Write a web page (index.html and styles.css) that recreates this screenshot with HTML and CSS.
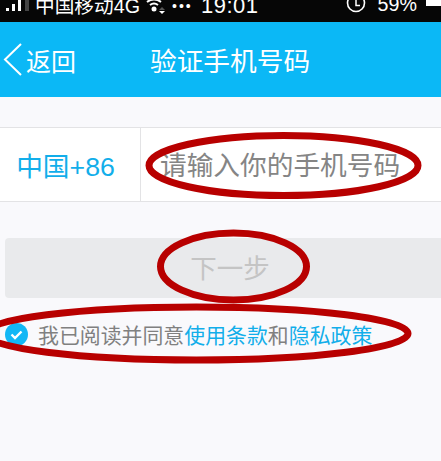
FILE: index.html
```html
<!DOCTYPE html>
<html lang="zh-cn">
<head>
    <meta charset="UTF-8">
    <meta name="viewport" content="width=device-width, initial-scale=1.0">
    <title>验证手机号码</title>
    <link rel="stylesheet" href="styles.css">
</head>
<body>
    <div class="screen">
        <div class="status-bar">
            <div class="status-left">
                <svg class="signal" width="29" height="13" viewBox="0 0 29 13">
                    <rect x="6" y="9" width="3" height="3" fill="#fff"/>
                    <rect x="12" y="5" width="3" height="7" fill="#fff"/>
                    <rect x="18" y="0" width="3" height="12" fill="#fff"/>
                    <rect x="25" y="0" width="4" height="12" fill="#444"/>
                </svg>
                <span class="carrier">中国移动4G</span>
                <svg class="wifi" width="20" height="14" viewBox="0 0 20 14">
                    <path d="M1 2 Q8 -3 15 2 M4 5 Q8 2 12 5" fill="none" stroke="#fff" stroke-width="2"/>
                    <circle cx="8" cy="9" r="2.5" fill="#fff"/>
                    <path d="M13 10 L16 7 L19 10 Z" fill="#555"/>
                    <path d="M13 11 L19 11 L16 14 Z" fill="#fff"/>
                </svg>
                <span class="dots">•••</span>
            </div>
            <span class="clock">19:01</span>
            <div class="status-right">
                <svg class="alarm" width="20" height="20" viewBox="0 0 20 20">
                    <circle cx="10" cy="3" r="8.5" fill="none" stroke="#fff" stroke-width="1.6"/>
                    <path d="M10 0 V5.5 H14" fill="none" stroke="#fff" stroke-width="1.5"/>
                </svg>
                <span class="battery-text">59%</span>
                <span class="battery"></span>
            </div>
        </div>
        <div class="nav-bar">
            <div class="nav-back">
                <svg width="22" height="33" viewBox="0 0 22 33">
                    <path d="M21 1 L5 16.5 L21 32" fill="none" stroke="#fff" stroke-width="2"/>
                </svg>
                <span>返回</span>
            </div>
            <span class="nav-title">验证手机号码</span>
        </div>
        <div class="phone-row">
            <div class="country">中国+86</div>
            <div class="phone-input">请输入你的手机号码</div>
        </div>
        <div class="next-btn">下一步</div>
        <div class="agree">
            <svg class="check" width="23" height="23" viewBox="0 0 23 23">
                <circle cx="11.5" cy="11.5" r="11.5" fill="#12b7f5"/>
                <path d="M6.5 11.5 L10 15 L16.5 8.5" fill="none" stroke="#fff" stroke-width="2.4"/>
            </svg>
            <span>我已阅读并同意<a class="link">使用条款</a>和<a class="link">隐私政策</a></span>
        </div>
        <!-- 红圈标注 -->
        <svg class="marks" width="441" height="461" viewBox="0 0 441 461">
            <ellipse cx="283.5" cy="165.5" rx="134.5" ry="30" />
            <ellipse cx="233.5" cy="266.5" rx="73" ry="33.5" />
            <ellipse cx="196.5" cy="333.5" rx="211.5" ry="26.5" />
        </svg>
    </div>
</body>
</html>
```

FILE: styles.css
```css
html,
body {
    margin: 0;
    padding: 0;
    height: 100%;
    overflow: hidden;
}
body {
    background-color: #f9f9fc;
    font-family: "Noto Sans CJK SC", "Liberation Sans", sans-serif;
}
.screen {
    position: relative;
    width: 441px;
    height: 461px;
    overflow: hidden;
}
.status-bar {
    height: 22px;
    background-color: #060606;
    color: #fff;
    display: flex;
    align-items: flex-end;
    overflow: hidden;
    font-family: "Liberation Sans", "Noto Sans CJK SC", sans-serif;
    font-size: 19.7px;
    line-height: 22px;
}
.status-bar span {
    position: relative;
    top: -5px;
}
.status-left {
    display: flex;
    width: 201px;
    align-items: flex-end;
    flex: none;
}
.signal {
    margin-bottom: 10px;
    flex: none;
}
.carrier {
    margin-left: 6px;
}
.wifi {
    margin: 0 0 8px 6px;
    flex: none;
}
.dots {
    margin-left: 6px;
    font-size: 14px;
    letter-spacing: 2px;
}
.clock {
    font-size: 22px;
    letter-spacing: 0.5px;
}
.status-right {
    display: flex;
    align-items: flex-end;
    margin-left: auto;
}
.alarm {
    margin-bottom: 2px;
}
.status-bar .battery-text {
    top: -7px;
    margin-left: 12px;
}
.battery {
    width: 30px;
    height: 14px;
    margin: 0 -17px 11px 9px;
    border: 1px solid #fff;
    background-color: #fff;
}
.nav-bar {
    height: 75px;
    background-color: #0bb8f6;
    color: #fff;
    display: flex;
    align-items: center;
    font-size: 26.7px;
}
.nav-back {
    display: flex;
    align-items: center;
    width: 150px;
    gap: 4px;
    font-size: 25px;
}
.phone-row {
    display: flex;
    height: 75px;
    margin-top: 30px;
    background-color: #fff;
    border-top: 1px solid #e3e3e5;
    border-bottom: 1px solid #e3e3e5;
    box-sizing: border-box;
    font-size: 26.7px;
}
.country {
    width: 141px;
    box-sizing: border-box;
    padding-right: 9px;
    border-right: 1px solid #e3e3e5;
    display: flex;
    align-items: center;
    justify-content: center;
    color: #12aeea;
    font-family: "Liberation Sans", "Noto Sans CJK SC", sans-serif;
}
.phone-input {
    display: flex;
    align-items: center;
    padding-left: 19px;
    padding-bottom: 2px;
    color: #858585;
}
.next-btn {
    height: 60px;
    box-sizing: border-box;
    margin: 36px -14px 0 5px;
    padding-bottom: 4px;
    background-color: #e9eaec;
    border-radius: 4px;
    display: flex;
    align-items: center;
    justify-content: center;
    color: #c4c4c4;
    font-size: 26.5px;
}
.agree {
    display: flex;
    align-items: center;
    height: 24px;
    margin-top: 24px;
    padding-left: 5px;
    gap: 10px;
    color: #808080;
    font-size: 20.9px;
}
.link {
    color: #12aeea;
}
.marks {
    position: absolute;
    top: 0;
    left: 0;
}
.marks ellipse {
    fill: none;
    stroke: #b80000;
    stroke-width: 7;
}
```
